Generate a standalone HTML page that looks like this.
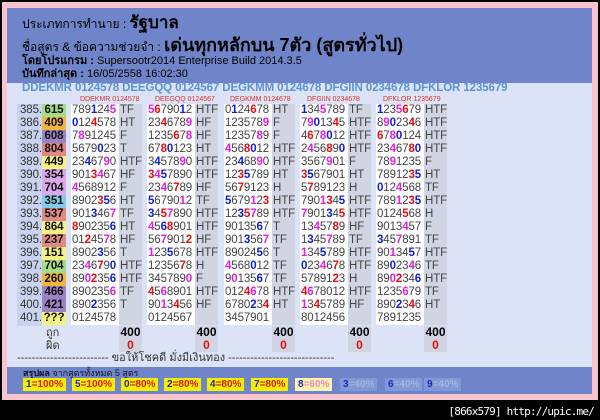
<!DOCTYPE html>
<html><head><meta charset="utf-8"><style>
*{margin:0;padding:0;box-sizing:border-box}
body{width:600px;height:420px;background:#000;position:relative;overflow:hidden;font-family:"Liberation Sans","DejaVu Sans",sans-serif}
#pink{position:absolute;left:2px;top:2px;width:596px;height:398px;background:#f7c3cd}
#inner{position:absolute;left:7px;top:8px;width:585px;height:386px;background:#dce3f6}
#head{position:absolute;left:7px;top:8px;width:585px;height:75px;background:#7085c9}
.t{position:absolute;white-space:nowrap;color:#000;line-height:1}
#codes{position:absolute;left:22px;top:82px;font-size:11.5px;line-height:13px;font-weight:bold;color:#5b93d6;white-space:nowrap;letter-spacing:-0.1px}
.lab{position:absolute;top:96px;font-size:7px;color:#e03030;white-space:nowrap;line-height:8px}
.numcol{position:absolute;left:17px;top:104px;width:25px;height:222px;background:#c9d3ef}
.row{position:absolute;height:13px;line-height:13px;font-size:11.5px;white-space:nowrap;overflow:hidden;letter-spacing:-0.1px}
.n{left:17px;width:25px;text-align:right;color:#333}
.res{left:42px;width:24px;text-align:center;font-weight:bold;color:#111}
.d{width:48px;background:#fff;color:#444;padding-left:1px}
.l{width:23px;background:#d1d5e3;color:#444;padding-left:1px}
.r{color:#e01010;font-weight:bold}.b{color:#1020d0;font-weight:bold}.m{color:#e020e0;font-weight:bold}
.tot{position:absolute;width:23px;background:#d1d5e3;top:326px;height:26px;text-align:center;font-size:12px;font-weight:bold;line-height:13px}
#bar{position:absolute;left:7px;top:367px;width:585px;height:27px;background:#7085c9}
.bd{position:absolute;top:378px;height:13px;line-height:13px;font-size:10px;font-weight:bold;padding:0 3px;background:#f5ee00;color:#e01818;white-space:nowrap}
.bd i{font-style:normal;color:#1b2cc0}
</style></head><body>
<div id="pink"></div><div id="inner"></div><div id="head"></div>
<div class="t" style="left:22px;top:14px;font-size:12px">ประเภทการทำนาย : <b style="font-size:17px">รัฐบาล</b></div>
<div class="t" style="left:22px;top:36px;font-size:12px">ชื่อสูตร &amp; ข้อความช่วยจำ : <b style="font-size:18px">เด่นทุกหลักบน 7ตัว (สูตรทั่วไป)</b></div>
<div class="t" style="left:22px;top:56px;font-size:11px"><b>โดยโปรแกรม :</b> Supersootr2014 Enterprise Build 2014.3.5</div>
<div class="t" style="left:22px;top:69px;font-size:11px"><b>บันทึกล่าสุด :</b> 16/05/2558 16:02:30</div>
<div id="codes">DDEKMR 0124578 DEEGQQ 0124567 DEGKMM 0124678 DFGIIN 0234678 DFKLOR 1235679</div>
<div class="lab" style="left:80px">DDEKMR 0124578</div>
<div class="lab" style="left:155px">DEEGQQ 0124567</div>
<div class="lab" style="left:230px">DEGKMM 0124678</div>
<div class="lab" style="left:307px">DFGIIN 0234678</div>
<div class="lab" style="left:383px">DFKLOR 1235679</div>
<div class="numcol"></div>

<div class="row n" style="top:104px">385.</div><div class="row res" style="top:104px;background:#a5dc88">615</div>
<div class="row d" style="top:104px;left:71px">789<span class="b">1</span>24<span class="m">5</span></div><div class="row l" style="top:104px;left:119px">TF</div>
<div class="row d" style="top:104px;left:147px"><span class="m">5</span><span class="r">6</span>790<span class="b">1</span>2</div><div class="row l" style="top:104px;left:195px">HTF</div>
<div class="row d" style="top:104px;left:224px">0<span class="b">1</span>24<span class="r">6</span>78</div><div class="row l" style="top:104px;left:272px">HT</div>
<div class="row d" style="top:104px;left:300px"><span class="b">1</span>34<span class="m">5</span>789</div><div class="row l" style="top:104px;left:348px">TF</div>
<div class="row d" style="top:104px;left:376px"><span class="b">1</span>23<span class="m">5</span><span class="r">6</span>79</div><div class="row l" style="top:104px;left:424px">HTF</div>

<div class="row n" style="top:117px">386.</div><div class="row res" style="top:117px;background:#f1b43e">409</div>
<div class="row d" style="top:117px;left:71px"><span class="b">0</span>12<span class="r">4</span>578</div><div class="row l" style="top:117px;left:119px">HT</div>
<div class="row d" style="top:117px;left:147px">23<span class="r">4</span>678<span class="m">9</span></div><div class="row l" style="top:117px;left:195px">HF</div>
<div class="row d" style="top:117px;left:224px">123578<span class="m">9</span></div><div class="row l" style="top:117px;left:272px">F</div>
<div class="row d" style="top:117px;left:300px">7<span class="m">9</span><span class="b">0</span>13<span class="r">4</span>5</div><div class="row l" style="top:117px;left:348px">HTF</div>
<div class="row d" style="top:117px;left:376px">8<span class="m">9</span><span class="b">0</span>23<span class="r">4</span>6</div><div class="row l" style="top:117px;left:424px">HTF</div>

<div class="row n" style="top:130px">387.</div><div class="row res" style="top:130px;background:#9c83c6">608</div>
<div class="row d" style="top:130px;left:71px">7<span class="m">8</span>91245</div><div class="row l" style="top:130px;left:119px">F</div>
<div class="row d" style="top:130px;left:147px">1235<span class="r">6</span>7<span class="m">8</span></div><div class="row l" style="top:130px;left:195px">HF</div>
<div class="row d" style="top:130px;left:224px">12357<span class="m">8</span>9</div><div class="row l" style="top:130px;left:272px">F</div>
<div class="row d" style="top:130px;left:300px">4<span class="r">6</span>7<span class="m">8</span><span class="b">0</span>12</div><div class="row l" style="top:130px;left:348px">HTF</div>
<div class="row d" style="top:130px;left:376px"><span class="r">6</span>7<span class="m">8</span><span class="b">0</span>124</div><div class="row l" style="top:130px;left:424px">HTF</div>

<div class="row n" style="top:143px">388.</div><div class="row res" style="top:143px;background:#e08a86">804</div>
<div class="row d" style="top:143px;left:71px">5679<span class="b">0</span>23</div><div class="row l" style="top:143px;left:119px">T</div>
<div class="row d" style="top:143px;left:147px">67<span class="r">8</span><span class="b">0</span>123</div><div class="row l" style="top:143px;left:195px">HT</div>
<div class="row d" style="top:143px;left:224px"><span class="m">4</span>56<span class="r">8</span><span class="b">0</span>12</div><div class="row l" style="top:143px;left:272px">HTF</div>
<div class="row d" style="top:143px;left:300px">2<span class="m">4</span>56<span class="r">8</span>9<span class="b">0</span></div><div class="row l" style="top:143px;left:348px">HTF</div>
<div class="row d" style="top:143px;left:376px">23<span class="m">4</span>67<span class="r">8</span><span class="b">0</span></div><div class="row l" style="top:143px;left:424px">HTF</div>

<div class="row n" style="top:156px">389.</div><div class="row res" style="top:156px;background:#f7f184">449</div>
<div class="row d" style="top:156px;left:71px">23<span class="b">4</span>67<span class="m">9</span>0</div><div class="row l" style="top:156px;left:119px">HTF</div>
<div class="row d" style="top:156px;left:147px">3<span class="b">4</span>578<span class="m">9</span>0</div><div class="row l" style="top:156px;left:195px">HTF</div>
<div class="row d" style="top:156px;left:224px">23<span class="b">4</span>68<span class="m">9</span>0</div><div class="row l" style="top:156px;left:272px">HTF</div>
<div class="row d" style="top:156px;left:300px">3567<span class="m">9</span>01</div><div class="row l" style="top:156px;left:348px">F</div>
<div class="row d" style="top:156px;left:376px">78<span class="m">9</span>1235</div><div class="row l" style="top:156px;left:424px">F</div>

<div class="row n" style="top:169px">390.</div><div class="row res" style="top:169px;background:#dba9eb">354</div>
<div class="row d" style="top:169px;left:71px">901<span class="r">3</span><span class="m">4</span>67</div><div class="row l" style="top:169px;left:119px">HF</div>
<div class="row d" style="top:169px;left:147px"><span class="r">3</span><span class="m">4</span><span class="b">5</span>7890</div><div class="row l" style="top:169px;left:195px">HTF</div>
<div class="row d" style="top:169px;left:224px">12<span class="r">3</span><span class="b">5</span>789</div><div class="row l" style="top:169px;left:272px">HT</div>
<div class="row d" style="top:169px;left:300px"><span class="r">3</span><span class="b">5</span>67901</div><div class="row l" style="top:169px;left:348px">HT</div>
<div class="row d" style="top:169px;left:376px">78912<span class="r">3</span><span class="b">5</span></div><div class="row l" style="top:169px;left:424px">HT</div>

<div class="row n" style="top:182px">391.</div><div class="row res" style="top:182px;background:#dba9eb">704</div>
<div class="row d" style="top:182px;left:71px"><span class="m">4</span>568912</div><div class="row l" style="top:182px;left:119px">F</div>
<div class="row d" style="top:182px;left:147px">23<span class="m">4</span>6<span class="r">7</span>89</div><div class="row l" style="top:182px;left:195px">HF</div>
<div class="row d" style="top:182px;left:224px">56<span class="r">7</span>9123</div><div class="row l" style="top:182px;left:272px">H</div>
<div class="row d" style="top:182px;left:300px">5<span class="r">7</span>89123</div><div class="row l" style="top:182px;left:348px">H</div>
<div class="row d" style="top:182px;left:376px"><span class="b">0</span>12<span class="m">4</span>568</div><div class="row l" style="top:182px;left:424px">TF</div>

<div class="row n" style="top:195px">392.</div><div class="row res" style="top:195px;background:#83cbe9">351</div>
<div class="row d" style="top:195px;left:71px">8902<span class="r">3</span><span class="b">5</span>6</div><div class="row l" style="top:195px;left:119px">HT</div>
<div class="row d" style="top:195px;left:147px"><span class="b">5</span>6790<span class="m">1</span>2</div><div class="row l" style="top:195px;left:195px">TF</div>
<div class="row d" style="top:195px;left:224px"><span class="b">5</span>679<span class="m">1</span>2<span class="r">3</span></div><div class="row l" style="top:195px;left:272px">HTF</div>
<div class="row d" style="top:195px;left:300px">790<span class="m">1</span><span class="r">3</span>4<span class="b">5</span></div><div class="row l" style="top:195px;left:348px">HTF</div>
<div class="row d" style="top:195px;left:376px">789<span class="m">1</span>2<span class="r">3</span><span class="b">5</span></div><div class="row l" style="top:195px;left:424px">HTF</div>

<div class="row n" style="top:208px">393.</div><div class="row res" style="top:208px;background:#e08a86">537</div>
<div class="row d" style="top:208px;left:71px">901<span class="b">3</span>46<span class="m">7</span></div><div class="row l" style="top:208px;left:119px">TF</div>
<div class="row d" style="top:208px;left:147px"><span class="b">3</span>4<span class="r">5</span><span class="m">7</span>890</div><div class="row l" style="top:208px;left:195px">HTF</div>
<div class="row d" style="top:208px;left:224px">12<span class="b">3</span><span class="r">5</span><span class="m">7</span>89</div><div class="row l" style="top:208px;left:272px">HTF</div>
<div class="row d" style="top:208px;left:300px"><span class="m">7</span>901<span class="b">3</span>4<span class="r">5</span></div><div class="row l" style="top:208px;left:348px">HTF</div>
<div class="row d" style="top:208px;left:376px">0124<span class="r">5</span>68</div><div class="row l" style="top:208px;left:424px">H</div>

<div class="row n" style="top:221px">394.</div><div class="row res" style="top:221px;background:#f7f184">864</div>
<div class="row d" style="top:221px;left:71px"><span class="r">8</span>90235<span class="b">6</span></div><div class="row l" style="top:221px;left:119px">HT</div>
<div class="row d" style="top:221px;left:147px"><span class="m">4</span>5<span class="b">6</span><span class="r">8</span>901</div><div class="row l" style="top:221px;left:195px">HTF</div>
<div class="row d" style="top:221px;left:224px">90135<span class="b">6</span>7</div><div class="row l" style="top:221px;left:272px">T</div>
<div class="row d" style="top:221px;left:300px">13<span class="m">4</span>57<span class="r">8</span>9</div><div class="row l" style="top:221px;left:348px">HF</div>
<div class="row d" style="top:221px;left:376px">9013<span class="m">4</span>57</div><div class="row l" style="top:221px;left:424px">F</div>

<div class="row n" style="top:234px">395.</div><div class="row res" style="top:234px;background:#e08a86">237</div>
<div class="row d" style="top:234px;left:71px">01<span class="r">2</span>45<span class="m">7</span>8</div><div class="row l" style="top:234px;left:119px">HF</div>
<div class="row d" style="top:234px;left:147px">56<span class="m">7</span>901<span class="r">2</span></div><div class="row l" style="top:234px;left:195px">HF</div>
<div class="row d" style="top:234px;left:224px">901<span class="b">3</span>56<span class="m">7</span></div><div class="row l" style="top:234px;left:272px">TF</div>
<div class="row d" style="top:234px;left:300px">1<span class="b">3</span>45<span class="m">7</span>89</div><div class="row l" style="top:234px;left:348px">TF</div>
<div class="row d" style="top:234px;left:376px"><span class="b">3</span>45<span class="m">7</span>891</div><div class="row l" style="top:234px;left:424px">TF</div>

<div class="row n" style="top:247px">396.</div><div class="row res" style="top:247px;background:#f7f184">151</div>
<div class="row d" style="top:247px;left:71px">8902<span class="b">3</span>56</div><div class="row l" style="top:247px;left:119px">T</div>
<div class="row d" style="top:247px;left:147px"><span class="m">1</span>23<span class="b">5</span>678</div><div class="row l" style="top:247px;left:195px">HTF</div>
<div class="row d" style="top:247px;left:224px">89024<span class="b">5</span>6</div><div class="row l" style="top:247px;left:272px">T</div>
<div class="row d" style="top:247px;left:300px"><span class="m">1</span>34<span class="b">5</span>789</div><div class="row l" style="top:247px;left:348px">HTF</div>
<div class="row d" style="top:247px;left:376px">90<span class="m">1</span>34<span class="b">5</span>7</div><div class="row l" style="top:247px;left:424px">HTF</div>

<div class="row n" style="top:260px">397.</div><div class="row res" style="top:260px;background:#a5dc88">704</div>
<div class="row d" style="top:260px;left:71px">23<span class="m">4</span>6<span class="r">7</span>9<span class="b">0</span></div><div class="row l" style="top:260px;left:119px">HTF</div>
<div class="row d" style="top:260px;left:147px">12356<span class="r">7</span>8</div><div class="row l" style="top:260px;left:195px">H</div>
<div class="row d" style="top:260px;left:224px"><span class="m">4</span>568<span class="b">0</span>12</div><div class="row l" style="top:260px;left:272px">TF</div>
<div class="row d" style="top:260px;left:300px"><span class="b">0</span>23<span class="m">4</span>6<span class="r">7</span>8</div><div class="row l" style="top:260px;left:348px">HTF</div>
<div class="row d" style="top:260px;left:376px">89<span class="b">0</span>23<span class="m">4</span>6</div><div class="row l" style="top:260px;left:424px">TF</div>

<div class="row n" style="top:273px">398.</div><div class="row res" style="top:273px;background:#f1b43e">260</div>
<div class="row d" style="top:273px;left:71px">89<span class="m">0</span><span class="r">2</span>35<span class="b">6</span></div><div class="row l" style="top:273px;left:119px">HTF</div>
<div class="row d" style="top:273px;left:147px">345789<span class="m">0</span></div><div class="row l" style="top:273px;left:195px">F</div>
<div class="row d" style="top:273px;left:224px">9<span class="m">0</span>135<span class="b">6</span>7</div><div class="row l" style="top:273px;left:272px">TF</div>
<div class="row d" style="top:273px;left:300px">57891<span class="r">2</span>3</div><div class="row l" style="top:273px;left:348px">H</div>
<div class="row d" style="top:273px;left:376px">89<span class="m">0</span><span class="r">2</span>34<span class="b">6</span></div><div class="row l" style="top:273px;left:424px">HTF</div>

<div class="row n" style="top:286px">399.</div><div class="row res" style="top:286px;background:#9c83c6">466</div>
<div class="row d" style="top:286px;left:71px">890235<span class="m">6</span></div><div class="row l" style="top:286px;left:119px">TF</div>
<div class="row d" style="top:286px;left:147px"><span class="r">4</span>5<span class="m">6</span>8901</div><div class="row l" style="top:286px;left:195px">HTF</div>
<div class="row d" style="top:286px;left:224px">012<span class="r">4</span><span class="m">6</span>78</div><div class="row l" style="top:286px;left:272px">HTF</div>
<div class="row d" style="top:286px;left:300px"><span class="r">4</span><span class="m">6</span>78012</div><div class="row l" style="top:286px;left:348px">HTF</div>
<div class="row d" style="top:286px;left:376px">1235<span class="m">6</span>79</div><div class="row l" style="top:286px;left:424px">TF</div>

<div class="row n" style="top:299px">400.</div><div class="row res" style="top:299px;background:#9c83c6">421</div>
<div class="row d" style="top:299px;left:71px">890<span class="b">2</span>356</div><div class="row l" style="top:299px;left:119px">T</div>
<div class="row d" style="top:299px;left:147px">90<span class="m">1</span>3<span class="r">4</span>56</div><div class="row l" style="top:299px;left:195px">HF</div>
<div class="row d" style="top:299px;left:224px">6780<span class="b">2</span>3<span class="r">4</span></div><div class="row l" style="top:299px;left:272px">HT</div>
<div class="row d" style="top:299px;left:300px"><span class="m">1</span>3<span class="r">4</span>5789</div><div class="row l" style="top:299px;left:348px">HF</div>
<div class="row d" style="top:299px;left:376px">890<span class="b">2</span>3<span class="r">4</span>6</div><div class="row l" style="top:299px;left:424px">HT</div>

<div class="row n" style="top:312px">401.</div><div class="row res" style="top:312px;background:#f7f184">???</div>
<div class="row d" style="top:312px;left:71px">0124578</div><div class="row l" style="top:312px;left:119px"></div>
<div class="row d" style="top:312px;left:147px">0124567</div><div class="row l" style="top:312px;left:195px"></div>
<div class="row d" style="top:312px;left:224px">3457901</div><div class="row l" style="top:312px;left:272px"></div>
<div class="row d" style="top:312px;left:300px">8012456</div><div class="row l" style="top:312px;left:348px"></div>
<div class="row d" style="top:312px;left:376px">7891235</div><div class="row l" style="top:312px;left:424px"></div>

<div class="t" style="left:46px;top:328px;font-size:11px;color:#333">ถูก</div>
<div class="t" style="left:46px;top:341px;font-size:11px;color:#333">ผิด</div>
<div class="tot" style="left:119px">400<br><span style="color:#e01010">0</span></div>
<div class="tot" style="left:195px">400<br><span style="color:#e01010">0</span></div>
<div class="tot" style="left:272px">400<br><span style="color:#e01010">0</span></div>
<div class="tot" style="left:348px">400<br><span style="color:#e01010">0</span></div>
<div class="tot" style="left:424px">400<br><span style="color:#e01010">0</span></div>
<div class="t" style="left:17px;top:353px;font-size:11px;color:#333">------------------------- ขอให้โชคดี มั่งมีเงินทอง -----------------------------</div>
<div id="bar"></div>
<div class="t" style="left:23px;top:369px;font-size:9px;color:#112"><b>สรุปผล</b> จากสูตรทั้งหมด 5 สูตร</div>
<div class="bd" style="left:23px"><i>1</i>=100%</div>
<div class="bd" style="left:72px"><i>5</i>=100%</div>
<div class="bd" style="left:121px"><i>0</i>=80%</div>
<div class="bd" style="left:164px"><i>2</i>=80%</div>
<div class="bd" style="left:207px"><i>4</i>=80%</div>
<div class="bd" style="left:251px"><i>7</i>=80%</div>
<div class="bd" style="left:295px;background:#fbf3b0;color:#f08fc0"><i>8</i>=60%</div>
<div class="bd" style="left:340px;background:#7f98d8;color:#a8b4d8"><i>3</i>=40%</div>
<div class="bd" style="left:385px;background:#7f98d8;color:#a8b4d8"><i>6</i>=40%</div>
<div class="bd" style="left:424px;background:#7f98d8;color:#a8b4d8"><i>9</i>=40%</div>
<div class="t" style="right:6px;top:406px;font-size:11px;color:#fff;font-family:'DejaVu Sans Mono',monospace;letter-spacing:-0.8px">[866x579] http://upic.me/</div>
</body></html>
